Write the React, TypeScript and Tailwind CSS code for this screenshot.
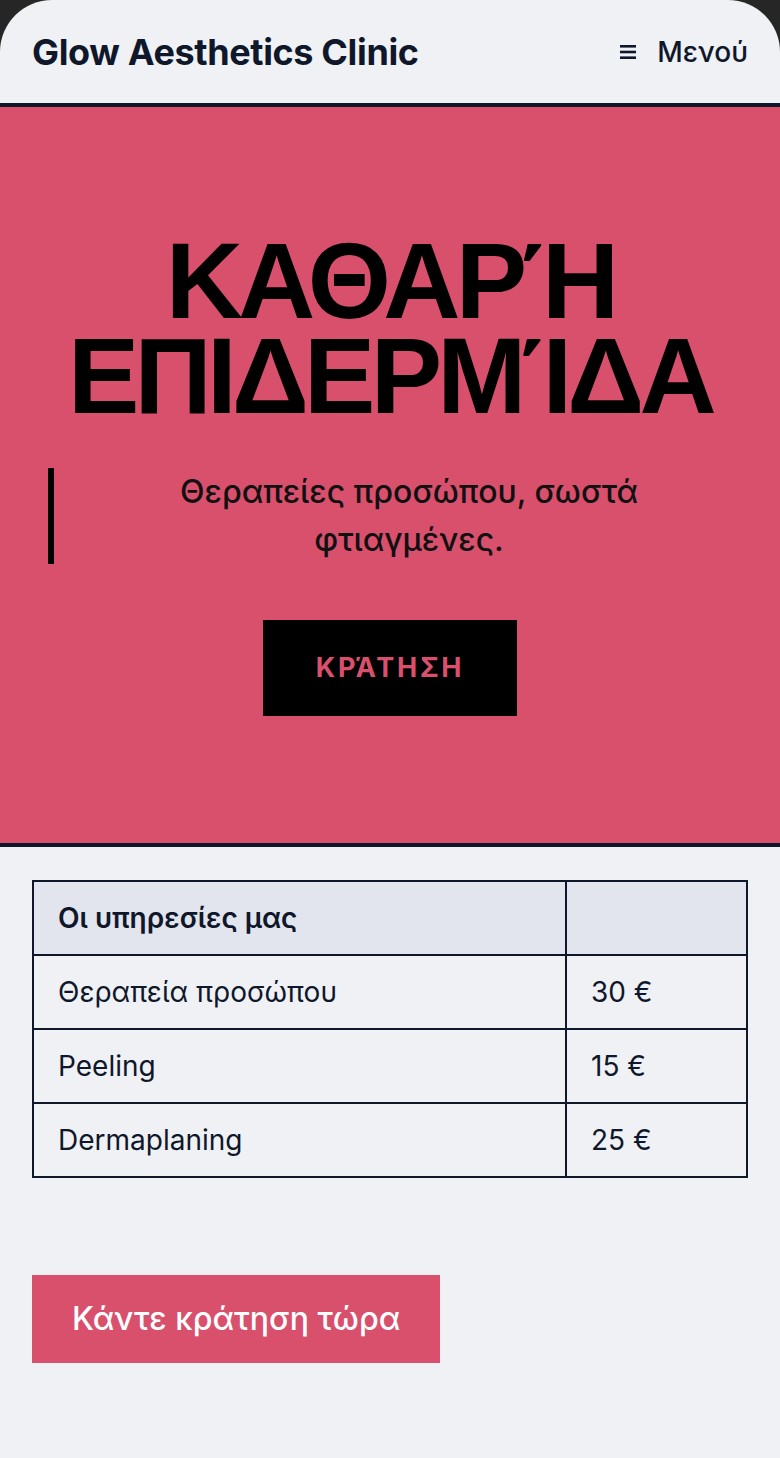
const services = [
  { name: "Θεραπεία προσώπου", price: "30 €" },
  { name: "Peeling", price: "15 €" },
  { name: "Dermaplaning", price: "25 €" },
];

export default function App() {
  return (
    <div className="min-h-screen bg-[#262626]" style={{ fontFamily: "Inter, 'Noto Sans', sans-serif" }}>
      <div className="min-h-screen overflow-hidden rounded-t-[52px] bg-[#eff1f5] text-[#0f172a]">
        <header className="flex h-[107px] items-center justify-between border-b-4 border-[#0f172a] px-8">
          <h1 className="text-[36px] font-bold tracking-[-0.01em]">Glow Aesthetics Clinic</h1>
          <button className="flex items-center gap-[21px] text-[28px] font-medium">
            <svg width="16" height="14" viewBox="0 0 16 14" fill="#0f172a" aria-hidden="true">
              <rect x="0" y="0" width="16" height="2.6" />
              <rect x="0" y="5.7" width="16" height="2.6" />
              <rect x="0" y="11.4" width="16" height="2.6" />
            </svg>
            <span>Μενού</span>
          </button>
        </header>

        <section className="flex flex-col items-center border-b-4 border-[#0f172a] bg-[#d9506d] px-12 py-[127px]">
          <h2
            className="text-center text-[107px] font-bold leading-[95px] tracking-[-0.045em] text-black"
            style={{ fontFamily: "'Liberation Sans', Arial, sans-serif" }}
          >
            <span className="block">ΚΑΘΑΡΉ</span>
            <span className="block">ΕΠΙΔΕΡΜΊΔΑ</span>
          </h2>
          <p className="mt-11 w-full border-l-[6px] border-black pl-8 text-center text-[32px] font-medium leading-[48px] text-[#111]">
            Θεραπείες προσώπου, σωστά φτιαγμένες.
          </p>
          <a className="mt-14 bg-black px-[53px] py-[28px] text-[27px] font-bold leading-[40px] tracking-[0.1em] text-[#d9506d]">
            ΚΡΆΤΗΣΗ
          </a>
        </section>

        <main className="px-8 pb-24 pt-[33px]">
          <table className="w-full border-collapse border-2 border-[#0f172a] text-left text-[28px]">
            <thead>
              <tr className="bg-[#e2e5ee]">
                <th className="w-[533px] border-2 border-[#0f172a] px-6 py-4 font-semibold leading-[40px]">
                  Οι υπηρεσίες μας
                </th>
                <th className="border-2 border-[#0f172a] px-6 py-4"></th>
              </tr>
            </thead>
            <tbody>
              {services.map((s) => (
                <tr key={s.name}>
                  <td className="border-2 border-[#0f172a] px-6 py-4 leading-[40px]">{s.name}</td>
                  <td className="border-2 border-[#0f172a] px-6 py-4 leading-[40px]">{s.price}</td>
                </tr>
              ))}
            </tbody>
          </table>

          <button className="mt-[97px] bg-[#d9506d] px-10 py-6 text-[32px] font-medium leading-[40px] text-white">
            Κάντε κράτηση τώρα
          </button>
        </main>
      </div>
    </div>
  );
}
